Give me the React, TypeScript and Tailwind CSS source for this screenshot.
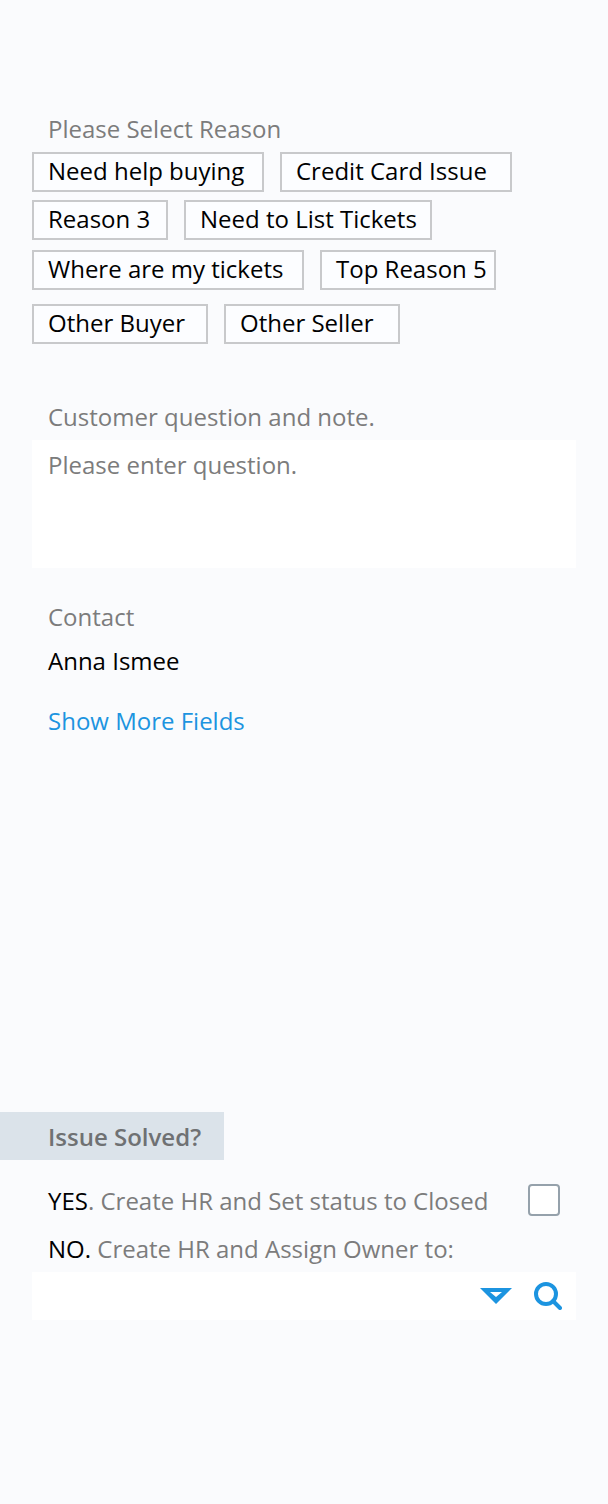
import React, { useState } from 'react';
import clsx from 'clsx';

// Each row keeps its own order and spacing
const reasonRows = [
  {
    className: 'mt-[7px]',
    reasons: [
      { label: 'Need help buying', width: 'w-[232px]' },
      { label: 'Credit Card Issue', width: 'w-[232px]' },
    ],
  },
  {
    className: 'mt-2',
    reasons: [
      { label: 'Reason 3', width: 'w-[136px]' },
      { label: 'Need to List Tickets', width: 'w-[248px]' },
    ],
  },
  {
    className: 'mt-2.5',
    reasons: [
      { label: 'Where are my tickets', width: 'w-[272px]' },
      { label: 'Top Reason 5', width: 'w-[176px]' },
    ],
  },
  {
    className: 'mt-3.5',
    reasons: [
      { label: 'Other Buyer', width: 'w-[176px]' },
      { label: 'Other Seller', width: 'w-[176px]' },
    ],
  },
];

const App: React.FC = () => {
  const [reason, setReason] = useState<string | null>(null);
  const [question, setQuestion] = useState('');
  const [solved, setSolved] = useState(false);
  const [owner, setOwner] = useState('');

  return (
    <main className="flex min-h-screen flex-col bg-[#fafbfd] pt-[113px] pb-[184px] font-['Open_Sans',sans-serif] text-[24px] leading-8 text-[#7c7c7c]">
      {/* Reasons */}
      <section className="px-8">
        <h2 className="px-4">Please Select Reason</h2>
        {reasonRows.map((row) => (
          <div key={row.reasons[0].label} className={clsx('flex gap-4', row.className)}>
            {row.reasons.map(({ label, width }) => (
              <button
                key={label}
                type="button"
                aria-pressed={reason === label}
                onClick={() => setReason(label)}
                className={clsx(
                  'h-10 border-2 border-[#c8c9cb] bg-[#fcfdff] px-3.5 pb-0.5 text-left whitespace-nowrap text-black aria-pressed:border-[#1c94e0]',
                  width
                )}
              >
                {label}
              </button>
            ))}
          </div>
        ))}
      </section>

      {/* Question */}
      <section className="mt-[57px] px-8">
        <label htmlFor="question" className="block px-4">Customer question and note.</label>
        <textarea
          id="question"
          placeholder="Please enter question."
          value={question}
          onChange={(e) => setQuestion(e.target.value)}
          className="mt-[7px] block h-32 w-full resize-none bg-white px-4 pt-[9px] text-black outline-none placeholder:text-[#7c7c7c]"
        />
      </section>

      {/* Contact */}
      <section className="mt-[33px] px-12">
        <h2>Contact</h2>
        <p className="mt-3 text-black">Anna Ismee</p>
        <a href="#fields" className="mt-7 inline-block text-[#1c94e0]">Show More Fields</a>
      </section>

      {/* Resolution */}
      <section className="mt-auto">
        <h2 className="w-56 bg-[#dbe3ea] pt-0.5 pl-12 leading-[46px] font-semibold text-[#6f7173]">Issue Solved?</h2>
        <div className="mt-6 flex items-start justify-between px-12">
          <label htmlFor="solved" className="leading-[34px]">
            <span className="text-black">YES</span>. Create HR and Set status to Closed
          </label>
          <input
            id="solved"
            type="checkbox"
            checked={solved}
            onChange={(e) => setSolved(e.target.checked)}
            className="size-8 appearance-none rounded border-2 border-[#95a1ab] bg-white checked:bg-[#1c94e0]"
          />
        </div>
        <label htmlFor="owner" className="mt-[15px] block px-12">
          <span className="text-black">NO.</span> Create HR and Assign Owner to:
        </label>
        <div className="mx-8 mt-[7px] flex h-12 items-center bg-white pr-3.5 pl-4">
          <input
            id="owner"
            type="text"
            value={owner}
            onChange={(e) => setOwner(e.target.value)}
            className="h-full min-w-0 flex-1 text-black outline-none"
          />
          <button type="button" aria-label="Show owners" className="text-[#1c94e0]">
            <svg width="32" height="32" viewBox="0 0 32 32" fill="currentColor" fillRule="evenodd">
              <path d="M0 8H32L16 24ZM10 12L16 17L22 12Z" />
            </svg>
          </button>
          <button type="button" aria-label="Search owners" className="ml-[22px] text-[#1c94e0]">
            <svg width="28" height="28" viewBox="0 0 28 28" fill="none" stroke="currentColor" strokeWidth="4">
              <circle cx="12" cy="12" r="10" />
              <path d="M19 19L26 26" strokeLinecap="round" />
            </svg>
          </button>
        </div>
      </section>
    </main>
  );
};

export default App;
